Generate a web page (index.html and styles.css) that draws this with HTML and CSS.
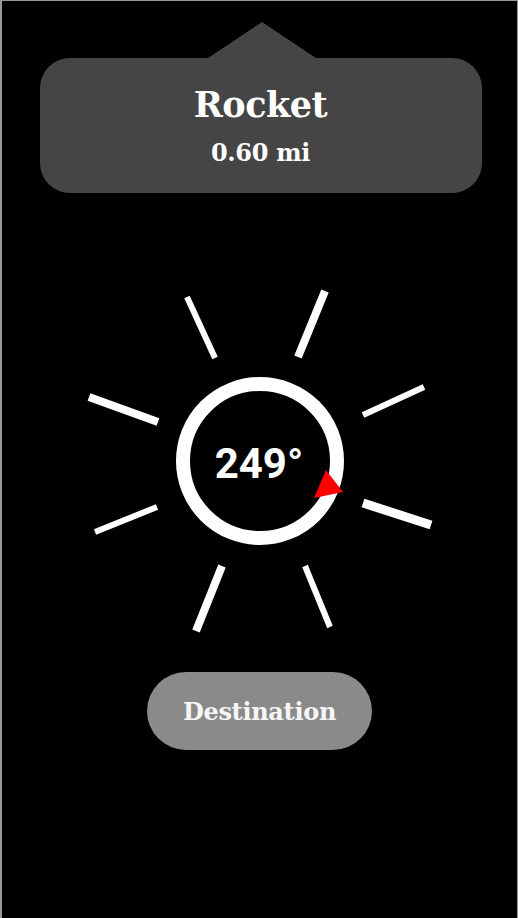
FILE: index.html
```html
<!DOCTYPE html>
<html>
<head>
<meta charset="utf-8">
<link rel="stylesheet" href="styles.css">
</head>
<body>
<div class="screen">
  <div class="callout">
    <div class="callout-arrow"></div>
    <div class="callout-box">
      <div class="callout-title">Rocket</div>
      <div class="callout-dist">0.60 mi</div>
    </div>
  </div>
  <svg class="compass" width="360" height="360" viewBox="80 280 360 360" xmlns="http://www.w3.org/2000/svg">
    <g stroke="#fff" stroke-linecap="butt">
      <line x1="187" y1="297" x2="215" y2="358" stroke-width="6"/>
      <line x1="325" y1="291" x2="298" y2="357" stroke-width="8"/>
      <line x1="89" y1="397" x2="158" y2="422" stroke-width="8"/>
      <line x1="363" y1="415" x2="424" y2="387" stroke-width="6"/>
      <line x1="95" y1="532" x2="157" y2="507" stroke-width="6"/>
      <line x1="363" y1="503" x2="431" y2="525" stroke-width="9"/>
      <line x1="222" y1="566" x2="196" y2="631" stroke-width="8"/>
      <line x1="305" y1="566" x2="330" y2="627" stroke-width="6"/>
    </g>
    <circle cx="260" cy="461" r="77" fill="none" stroke="#fff" stroke-width="14"/>
    <polygon points="314,498 326,470 343,492" fill="#f00"/>
    <text class="heading" x="259" y="478" text-anchor="middle">249°</text>
  </svg>
  <div class="dest-row">
    <div class="dest-pill">Destination</div>
  </div>
</div>
</body>
</html>
```

FILE: styles.css
```css
html, body {
  margin: 0;
  padding: 0;
  background: #000;
}
.screen {
  box-sizing: border-box;
  width: 518px;
  height: 918px;
  background: #000;
  border-top: 1px solid #9a9a9a;
  border-left: 2px solid #9a9a9a;
  border-right: 1px solid #9a9a9a;
  display: flex;
  flex-direction: column;
  align-items: center;
  overflow: hidden;
}
.callout {
  margin-top: 21px;
  display: flex;
  flex-direction: column;
  align-items: center;
  width: 442px;
  margin-left: 2px;
}
.callout-arrow {
  width: 0;
  height: 0;
  border-left: 54px solid transparent;
  border-right: 54px solid transparent;
  border-bottom: 36px solid #454545;
  margin-left: 2px;
}
.callout-box {
  box-sizing: border-box;
  width: 442px;
  height: 135px;
  background: #454545;
  border-radius: 30px;
  display: flex;
  flex-direction: column;
  align-items: center;
  padding-top: 25px;
  color: #fff;
  font-family: "DejaVu Serif", "Liberation Serif", serif;
  font-weight: bold;
}
.callout-title {
  font-size: 35px;
  line-height: 44px;
  letter-spacing: -0.5px;
}
.callout-dist {
  margin-top: 10px;
  font-size: 24px;
  line-height: 32px;
  letter-spacing: -0.3px;
}
.compass {
  display: block;
  margin-top: 87px;
  flex: none;
}
.heading {
  font-family: Roboto, "Liberation Sans", sans-serif;
  font-weight: bold;
  font-size: 42px;
  fill: #fff;
}
.dest-row {
  margin-top: 32px;
  display: flex;
  justify-content: center;
  width: 100%;
}
.dest-pill {
  width: 225px;
  height: 78px;
  border-radius: 39px;
  background: #8a8a8a;
  color: #f6f6f6;
  display: flex;
  align-items: center;
  justify-content: center;
  font-family: "DejaVu Serif", "Liberation Serif", serif;
  font-weight: bold;
  font-size: 24px;
  letter-spacing: -0.3px;
  margin-left: 0;
}
```
